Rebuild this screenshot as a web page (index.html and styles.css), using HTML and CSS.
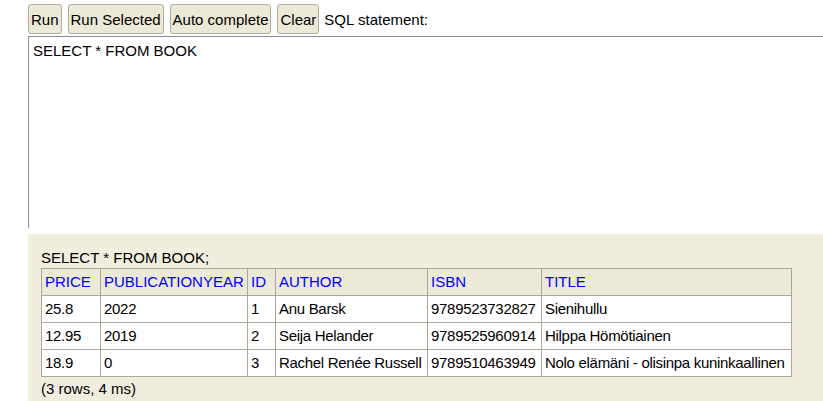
FILE: index.html
```html
<!DOCTYPE html>
<html>
<head>
<meta charset="utf-8">
<link rel="stylesheet" href="styles.css">
</head>
<body>
<div class="top">
  <div class="toolbar">
    <button class="btn">Run</button>
    <button class="btn">Run Selected</button>
    <button class="btn">Auto complete</button>
    <button class="btn">Clear</button>
    <span class="label">SQL statement:</span>
  </div>
  <div class="editor">SELECT * FROM BOOK</div>
</div>
<div class="result">
  <div class="stmt">SELECT * FROM BOOK;</div>
  <table class="grid">
    <thead>
      <tr>
        <th class="c-price"><a class="sort">PRICE</a></th>
        <th class="c-year"><a class="sort">PUBLICATIONYEAR</a></th>
        <th class="c-id"><a class="sort">ID</a></th>
        <th class="c-author"><a class="sort">AUTHOR</a></th>
        <th class="c-isbn"><a class="sort">ISBN</a></th>
        <th class="c-title"><a class="sort">TITLE</a></th>
      </tr>
    </thead>
    <tbody>
      <tr><td>25.8</td><td>2022</td><td>1</td><td>Anu Barsk</td><td>9789523732827</td><td>Sienihullu</td></tr>
      <tr><td>12.95</td><td>2019</td><td>2</td><td>Seija Helander</td><td>9789525960914</td><td>Hilppa Hömötiainen</td></tr>
      <tr><td>18.9</td><td>0</td><td>3</td><td>Rachel Renée Russell</td><td>9789510463949</td><td>Nolo elämäni - olisinpa kuninkaallinen</td></tr>
    </tbody>
  </table>
  <div class="footer">(3 rows, 4 ms)</div>
</div>
</body>
</html>
```
FILE: styles.css
```css
html, body {
  margin: 0;
  padding: 0;
  background: #fff;
  overflow: hidden;
}
body {
  font-family: "Liberation Sans", Arial, sans-serif;
  font-size: 15px;
  color: #000;
  width: 823px;
  height: 401px;
}
.top {
  height: 228px;
  padding-left: 28px;
  overflow: hidden;
}
.toolbar {
  display: flex;
  align-items: center;
  gap: 6px;
  padding-top: 4px;
  height: 30px;
}
.btn {
  font-family: "Liberation Sans", Arial, sans-serif;
  font-size: 15px;
  color: #000;
  height: 30px;
  margin: 0;
  padding: 0 2px;
  background: #ece9d8;
  border: 1px solid #b0ac9c;
  border-radius: 3px;
}
.label {
  margin-left: -1px;
}
.editor {
  margin-top: 2px;
  width: 820px;
  height: 300px;
  border-top: 1px solid #8e8e9e;
  border-left: 1px solid #8e8e9e;
  padding: 5px 4px;
  line-height: 17px;
}
.result {
  margin-top: 6px;
  margin-left: 28px;
  height: 167px;
  background: #f1eee0;
  padding: 15px 0 0 13px;
  box-sizing: border-box;
}
.stmt {
  line-height: 17px;
  margin-bottom: 2px;
}
.grid {
  border-collapse: collapse;
  table-layout: fixed;
  width: 751px;
  background: #fff;
}
.grid th, .grid td {
  border: 1px solid #aca899;
  padding: 4px 3px;
  line-height: 18px;
  text-align: left;
  font-weight: normal;
  white-space: nowrap;
}
.grid td {
  background: #fff;
  letter-spacing: -0.3px;
}
.grid th {
  background: #ece9d8;
}
.sort {
  color: #0000ff;
}
.c-price { width: 52px; }
.c-year { width: 140px; }
.c-id { width: 21px; }
.c-author { width: 145px; }
.c-isbn { width: 107px; }
.c-title { width: 243px; }
.footer {
  margin-top: 3px;
  line-height: 17px;
}
```
